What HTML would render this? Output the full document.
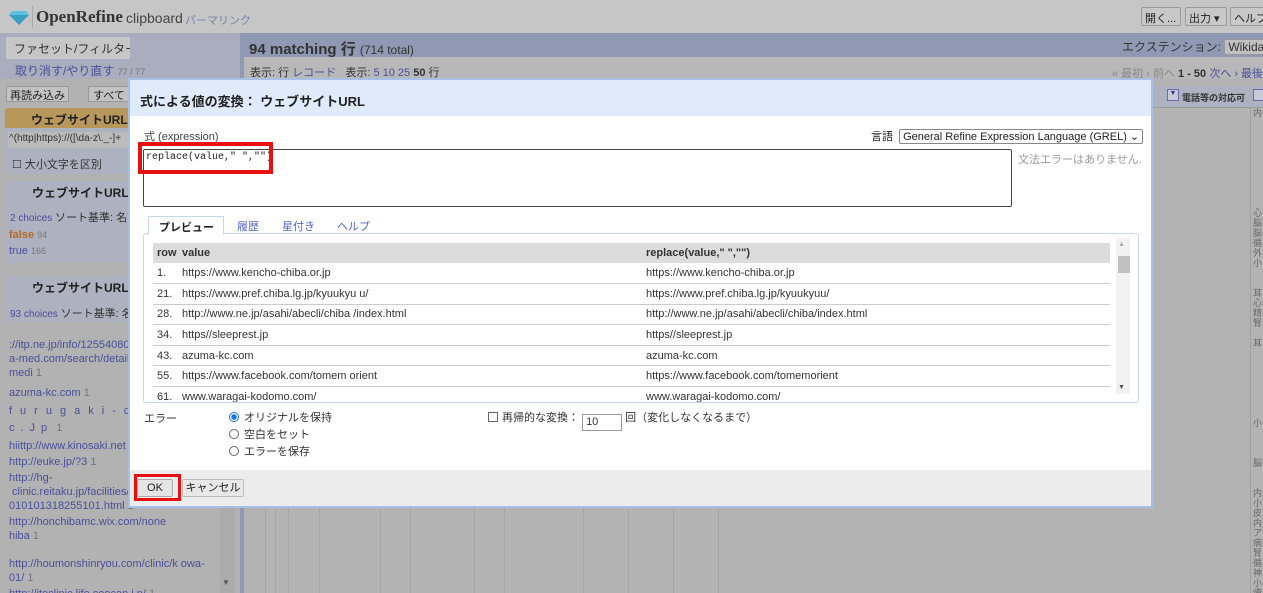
<!DOCTYPE html>
<html style="width:1263px;height:593px;overflow:hidden"><head><meta charset="utf-8"><style>
*{box-sizing:border-box;margin:0;padding:0}
body{width:1263px;height:593px;overflow:hidden;position:relative;background:#b3b3b3;font-family:"Liberation Sans","Noto Sans CJK JP",sans-serif;font-size:12px;color:#222}
.a{position:absolute;white-space:nowrap}
.lnk{color:#4a4f9a}
.g{color:#777}
td{white-space:nowrap}
</style></head><body>
<!-- top bar -->
<div class="a" style="left:0;top:0;width:1263px;height:33px;background:#c6c6c6"></div>
<svg class="a" style="left:9px;top:10px" width="20" height="16"><polygon points="3,1 17,1 20,5 10,15 0,5" fill="#3a9fc0"/><polygon points="3,1 17,1 20,5 0,5" fill="#5cc0e0"/></svg>
<div class="a" style="left:32px;top:6px;width:1px;height:22px;background:#aaa"></div>
<div class="a" style="left:36px;top:7px;font-family:'Liberation Serif',serif;font-weight:bold;font-size:17px;color:#333">OpenRefine</div>
<div class="a" style="left:126px;top:10px;font-size:14px;color:#444">clipboard</div>
<div class="a" style="left:185px;top:12px;font-size:11px;color:#7a84a8">パーマリンク</div>
<div class="a" style="left:1141px;top:7px;height:19px;width:40px;border:1px solid #999;border-radius:2px;background:#c8c8c8;font-size:11px;padding:2px 3px;overflow:hidden">開く...</div>
<div class="a" style="left:1185px;top:7px;height:19px;width:42px;border:1px solid #999;border-radius:2px;background:#c8c8c8;font-size:11px;padding:2px 3px;overflow:hidden">出力 ▾</div>
<div class="a" style="left:1230px;top:7px;height:19px;width:40px;border:1px solid #999;border-radius:2px;background:#c8c8c8;font-size:11px;padding:2px 3px;overflow:hidden">ヘルプ</div>
<!-- left panel -->
<div class="a" style="left:0;top:33px;width:240px;height:560px;background:#a9adbd"></div>
<div class="a" style="left:6px;top:37px;width:124px;height:22px;background:#c6c6c6;font-size:12px;padding:3px 8px;color:#333;overflow:hidden">ファセット/フィルター</div>
<div class="a lnk" style="left:15px;top:62px;font-size:12px">取り消す/やり直す <span class="g" style="font-size:9px">77 / 77</span></div>
<div class="a" style="left:0;top:79px;width:240px;height:514px;background:#b2b2b2"></div>
<div class="a" style="left:6px;top:86px;width:63px;height:16px;border:1px solid #999;background:#c2c2c2;font-size:11px;padding:0 3px;overflow:hidden">再読み込み</div>
<div class="a" style="left:88px;top:86px;width:50px;height:16px;border:1px solid #999;background:#c2c2c2;font-size:11px;padding:0 4px;overflow:hidden">すべて</div>
<div class="a" style="left:5px;top:108px;width:230px;height:66px;background:#aeb1bf;border-radius:3px"></div>
<div class="a" style="left:5px;top:108px;width:230px;height:20px;background:#b8975a;border-radius:3px 3px 0 0;font-weight:bold;font-size:12px;padding:3px 26px;color:#222">ウェブサイトURL</div>
<div class="a" style="left:8px;top:132px;width:225px;height:16px;background:#bbb;font-size:10px;color:#333;padding:1px">^(http|https)://([\da-z\._-]+</div>
<div class="a" style="left:12px;top:156px;font-size:11px;color:#333">☐ 大小文字を区別</div>
<div class="a" style="left:5px;top:181px;width:230px;height:82px;background:#aeb1bf;border-radius:3px"></div>
<div class="a" style="left:8px;top:184px;font-weight:bold;font-size:12px;padding-left:24px">ウェブサイトURL</div>
<div class="a lnk" style="left:10px;top:209px;font-size:10px">2 choices <span style="color:#333;font-size:11px">ソート基準: 名前</span></div>
<div class="a" style="left:9px;top:229px;font-size:11px;color:#b36a2a;font-weight:bold">false <span class="g" style="font-weight:normal;font-size:9px">94</span></div>
<div class="a lnk" style="left:9px;top:245px;font-size:11px">true <span class="g" style="font-size:9px">166</span></div>
<div class="a" style="left:5px;top:276px;width:230px;height:317px;background:#aeb1bf;border-radius:3px"></div>
<div class="a" style="left:8px;top:279px;font-weight:bold;font-size:12px;padding-left:24px">ウェブサイトURL</div>
<div class="a lnk" style="left:10px;top:305px;font-size:10px">93 choices <span style="color:#333;font-size:11px">ソート基準: 名前</span></div>
<div class="a" style="left:5px;top:322px;width:215px;height:271px;background:#b2b2b2"></div>
<div class="a lnk" style="left:9px;top:338px;font-size:11px;line-height:14px;width:200px;height:255px;overflow:hidden">://itp.ne.jp/info/12554080<br>a-med.com/search/detail.p<br>medi <span class="g">1</span>
<div style="margin-top:6px">azuma-kc.com <span class="g">1</span></div><div style="margin-top:4px;letter-spacing:8px">furugaki-cl</div><div style="margin-top:3px;letter-spacing:6px">c.Jp<span class="g" style="letter-spacing:0"> 1</span></div>
<div style="margin-top:4px">hiittp://www.kinosaki.net <span class="g">1</span></div><div style="margin-top:2px">http://euke.jp/?3 <span class="g">1</span></div>
<div style="margin-top:2px">http://hg-<br>&nbsp;clinic.reitaku.jp/facilities/2<br>010101318255101.html <span class="g">1</span></div>
<div style="margin-top:2px">http://honchibamc.wix.com/none<br>hiba <span class="g">1</span></div>
<div style="margin-top:14px">http://houmonshinryou.com/clinic/k owa-<br>01/ <span class="g">1</span></div>
<div style="margin-top:2px">http://itoclinic.life.coocan.j p/ <span class="g">1</span></div>
<div style="margin-top:2px">http://kobitsuiikai.or.jp/mkas</div></div>
<div class="a" style="left:220px;top:322px;width:15px;height:271px;background:#ababab"></div>
<div class="a" style="left:222px;top:578px;font-size:8px;color:#555">▼</div>
<!-- right header -->
<div class="a" style="left:240px;top:33px;width:1023px;height:24px;background:#8f99b3"></div>
<div class="a" style="left:249px;top:38px;font-size:15px;font-weight:bold;color:#333">94 matching 行 <span style="font-weight:normal;font-size:12px">(714 total)</span></div>
<div class="a" style="left:1122px;top:38px;font-size:12px;color:#333">エクステンション: <span style="background:#c0c0c0;border:1px solid #999;padding:0 3px">Wikidata ▾</span></div>
<div class="a" style="left:244px;top:57px;width:1019px;height:22px;background:#b8b8b8"></div>
<div class="a" style="left:250px;top:64px;font-size:11px;color:#333">表示: 行 <span class="lnk">レコード</span>&nbsp;&nbsp; 表示: <span class="lnk">5 10 25</span> <b>50</b> 行</div>
<div class="a" style="left:1112px;top:65px;font-size:11px;color:#888">« 最初 ‹ 前へ <b style="color:#333">1 - 50</b> <span class="lnk">次へ › 最後</span></div>
<div class="a" style="left:1152px;top:86px;width:111px;height:22px;background:#aeb1bf;border-bottom:1px solid #999"></div>
<div class="a" style="left:1167px;top:89px;width:12px;height:12px;border:1px solid #6a6aa8;background:#c8c8d8;font-size:7px;color:#33338a;text-align:center">▼</div>
<div class="a" style="left:1182px;top:91px;font-size:9px;font-weight:bold;color:#333">電話等の対応可</div>
<div class="a" style="left:1253px;top:89px;width:12px;height:12px;border:1px solid #6a6aa8;background:#c8c8d8"></div>
<div class="a" style="left:1250px;top:108px;width:1px;height:485px;background:#a0a0a0"></div>
<div class="a" style="left:1253px;top:108px;font-size:9px;color:#666;line-height:10px;width:10px;height:485px;overflow:hidden;white-space:normal">内<br><br><br><br><br><br><br><br><br><br>心<br>脳<br>脳<br>循<br>外<br>小<br><br><br>耳<br>心<br>精<br>腎<br><br>耳<br><br><br><br><br><br><br><br>小<br><br><br><br>脳<br><br><br>内<br>小<br>皮<br>内<br>ア<br>病<br>腎<br>循<br>神<br>小<br>瘡<br>精<br>小</div>
<div class="a" style="left:240px;top:33px;width:4px;height:560px;background:#8f99b3"></div>
<!-- grid lines bottom -->
<div class="a" style="left:247px;top:508px;width:1000px;height:85px;background:linear-gradient(90deg,transparent 0,transparent 18px,#a6a6a6 18px,#a6a6a6 19px,transparent 19px,transparent 28px,#a6a6a6 28px,#a6a6a6 29px,transparent 29px,transparent 41px,#a6a6a6 41px,#a6a6a6 42px,transparent 42px,transparent 72px,#a6a6a6 72px,#a6a6a6 73px,transparent 73px,transparent 133px,#a6a6a6 133px,#a6a6a6 134px,transparent 134px,transparent 163px,#a6a6a6 163px,#a6a6a6 164px,transparent 164px,transparent 227px,#a6a6a6 227px,#a6a6a6 228px,transparent 228px,transparent 257px,#a6a6a6 257px,#a6a6a6 258px,transparent 258px,transparent 336px,#a6a6a6 336px,#a6a6a6 337px,transparent 337px,transparent 381px,#a6a6a6 381px,#a6a6a6 382px,transparent 382px,transparent 426px,#a6a6a6 426px,#a6a6a6 427px,transparent 427px,transparent 471px,#a6a6a6 471px,#a6a6a6 472px,transparent 472px)"></div>
<!-- dialog -->
<div class="a" style="left:128px;top:78px;width:1025px;height:430px;background:#fff;border:2px solid #a6c0e8">
 <div class="a" style="left:0;top:0;width:1021px;height:36px;background:#dfeafb"></div>
 <div class="a" style="left:10px;top:11px;font-size:13px;font-weight:bold;color:#222">式による値の変換： ウェブサイトURL</div>
 <div class="a" style="left:14px;top:48px;font-size:11px;color:#444">式 (expression)</div>
 <div class="a" style="left:741px;top:48px;font-size:11px;color:#222">言語 <span style="display:inline-block;border:1px solid #888;border-radius:2px;padding:0 3px;font-size:11px;margin-left:3px">General Refine Expression Language (GREL) ⌄</span></div>
 <div class="a" style="left:13px;top:69px;width:869px;height:58px;border:1px solid #444;border-radius:2px;font-family:'Liberation Mono',monospace;font-size:10px;padding:2px 2px;color:#222">replace(value," ","")</div>
 <div class="a" style="left:8px;top:62px;width:135px;height:32px;border:4px solid #e81010"></div>
 <div class="a" style="left:888px;top:71px;font-size:11px;color:#999">文法エラーはありません.</div>
 <!-- tabs -->
 <div class="a" style="left:18px;top:136px;width:76px;height:19px;border:1px solid #c8d6ee;border-bottom:none;background:#fff;font-weight:bold;font-size:11px;padding:2px 10px;color:#222;z-index:2">プレビュー</div>
 <div class="a" style="left:107px;top:138px;font-size:11px;color:#5566cc">履歴</div>
 <div class="a" style="left:152px;top:138px;font-size:11px;color:#5566cc">星付き</div>
 <div class="a" style="left:207px;top:138px;font-size:11px;color:#5566cc">ヘルプ</div>
 <div class="a" style="left:13px;top:153px;width:996px;height:170px;border:1px solid #c8d6ee;border-radius:3px;overflow:hidden">
  <table style="position:absolute;left:9px;top:9px;width:957px;border-collapse:collapse;font-size:11px;color:#333">
   <tr style="background:#dcdcdc;height:20px;font-weight:bold"><td style="padding-left:4px;width:29px">row</td><td style="width:464px">value</td><td>replace(value," ","")</td></tr>
   <tr style="height:20.6px;border-bottom:1px solid #ccc"><td style="padding-left:4px">1.</td><td>https://www.kencho-chiba.or.jp</td><td>https://www.kencho-chiba.or.jp</td></tr>
   <tr style="height:20.6px;border-bottom:1px solid #ccc"><td style="padding-left:4px">21.</td><td>https://www.pref.chiba.lg.jp/kyuukyu u/</td><td>https://www.pref.chiba.lg.jp/kyuukyuu/</td></tr>
   <tr style="height:20.6px;border-bottom:1px solid #ccc"><td style="padding-left:4px">28.</td><td>http://www.ne.jp/asahi/abecli/chiba /index.html</td><td>http://www.ne.jp/asahi/abecli/chiba/index.html</td></tr>
   <tr style="height:20.6px;border-bottom:1px solid #ccc"><td style="padding-left:4px">34.</td><td>https//sleeprest.jp</td><td>https//sleeprest.jp</td></tr>
   <tr style="height:20.6px;border-bottom:1px solid #ccc"><td style="padding-left:4px">43.</td><td>azuma-kc.com</td><td>azuma-kc.com</td></tr>
   <tr style="height:20.6px;border-bottom:1px solid #ccc"><td style="padding-left:4px">55.</td><td>https://www.facebook.com/tomem orient</td><td>https://www.facebook.com/tomemorient</td></tr>
   <tr style="height:20.6px"><td style="padding-left:4px">61.</td><td>www.waragai-kodomo.com/</td><td>www.waragai-kodomo.com/</td></tr>
  </table>
  <div class="a" style="left:972px;top:4px;width:14px;height:156px;background:#f2f2f2"></div>
  <div class="a" style="left:974px;top:7px;font-size:7px;color:#aaa">▲</div>
  <div class="a" style="left:974px;top:22px;width:12px;height:17px;background:#c1c1c1"></div>
  <div class="a" style="left:974px;top:150px;font-size:7px;color:#555">▼</div>
 </div>
 <div class="a" style="left:14px;top:330px;font-size:11px;color:#333">エラー</div>
 <div class="a" style="left:99px;top:330px;font-size:11px;color:#333;line-height:17px">
  <div><span style="display:inline-block;width:10px;height:10px;border-radius:50%;border:1px solid #1a73e8;background:radial-gradient(#1a73e8 0 2.5px,#fff 3px);vertical-align:-1px;margin-right:5px"></span>オリジナルを保持</div>
  <div><span style="display:inline-block;width:10px;height:10px;border-radius:50%;border:1px solid #666;vertical-align:-1px;margin-right:5px"></span>空白をセット</div>
  <div><span style="display:inline-block;width:10px;height:10px;border-radius:50%;border:1px solid #666;vertical-align:-1px;margin-right:5px"></span>エラーを保存</div>
 </div>
 <div class="a" style="left:358px;top:329px;font-size:11px;color:#333"><span style="display:inline-block;width:10px;height:10px;border:1px solid #666;vertical-align:-1px;margin-right:4px"></span>再帰的な変換： <span style="display:inline-block;width:40px;height:17px;border:1px solid #999;padding:1px 3px;vertical-align:-4px">10</span> 回（変化しなくなるまで）</div>
 <div class="a" style="left:0;top:390px;width:1021px;height:36px;background:#ececec"></div>
 <div class="a" style="left:7px;top:399px;width:36px;height:18px;border:1px solid #aaa;border-radius:2px;background:#e4e4e4;font-size:11px;text-align:center;line-height:16px">OK</div>
 <div class="a" style="left:4px;top:394px;width:47px;height:27px;border:3px solid #e81010"></div>
 <div class="a" style="left:52px;top:399px;width:62px;height:18px;border:1px solid #bbb;border-radius:2px;background:#e8e8e8;font-size:11px;text-align:center;line-height:16px">キャンセル</div>
</div>
</body></html>
